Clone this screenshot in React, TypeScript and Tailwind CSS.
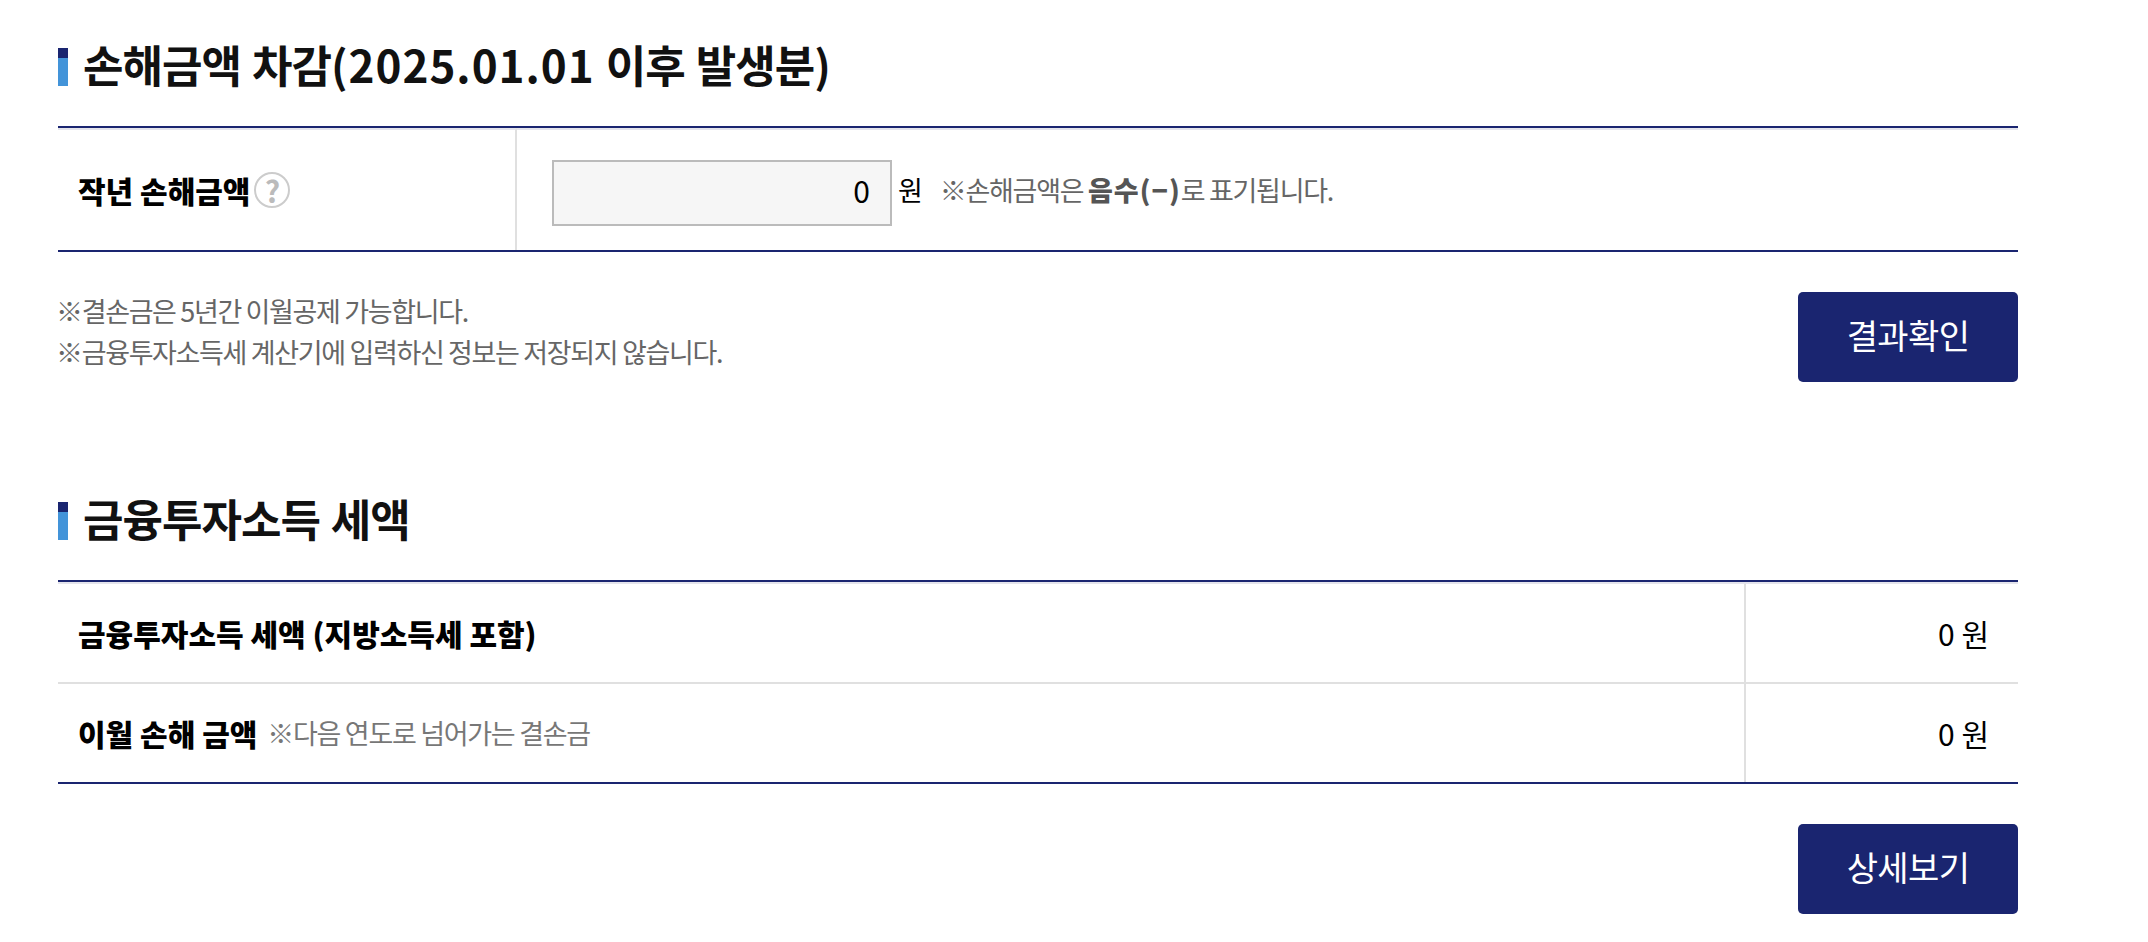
const NAVY = "border-[#1a2570]";

function SectionTitle({ children }: { children: React.ReactNode }) {
  return (
    <div className="flex h-[38px] items-center">
      <span className="flex h-[38px] w-[10px] shrink-0 flex-col">
        <span className="h-[10px] bg-[#1a2570]" />
        <span className="flex-1 bg-[#4394d9]" />
      </span>
      <h2 className="-mt-[7px] ml-[15px] whitespace-nowrap text-[44px] font-bold leading-[38px] tracking-[-1px] text-[#111] [word-spacing:2px]">
        {children}
      </h2>
    </div>
  );
}

function NavyButton({ label }: { label: string }) {
  return (
    <button
      type="button"
      className="flex h-[90px] w-[220px] items-center justify-center rounded-[5px] bg-[#1a2570] pb-[5px] text-[34px] font-normal tracking-[-0.6px] text-white"
    >
      {label}
    </button>
  );
}

function HelpIcon() {
  return (
    <span className="ml-[4px] flex h-[36px] w-[36px] items-center justify-center rounded-full border-2 border-[#ccc] text-[30px] font-bold leading-none text-[#bbb]">
      ?
    </span>
  );
}

export default function App() {
  return (
    <div className="h-[942px] w-[2148px] overflow-hidden bg-white pl-[58px] pt-[48px] font-['Noto_Sans_CJK_KR',sans-serif]">
      <div className="w-[1960px]">
        <SectionTitle>
          손해금액 차감<span className="tracking-[1px]">(2025.01.01</span> 이후 발생분)
        </SectionTitle>

        <div className={`mt-[40px] flex h-[126px] border-y-2 ${NAVY}`}>
          <div className="flex w-[459px] shrink-0 items-center border-r-2 border-t-2 border-r-[#e0e0e0] border-t-[#e4e4ec] pl-[20px]">
            <span className="text-[30px] font-black text-black">작년 손해금액</span>
            <HelpIcon />
          </div>
          <div className="flex flex-1 items-center border-t-2 border-t-[#e4e4ec] pl-[35px]">
            <input
              readOnly
              value="0"
              className="mt-[6px] h-[66px] w-[340px] border-2 border-[#bbb] bg-[#f6f6f6] pb-[6px] pr-[20px] text-right text-[30px] text-black outline-none"
            />
            <span className="ml-[6px] text-[27px] text-black">원</span>
            <span className="ml-[17px] text-[27px] tracking-[-1.3px] text-[#666]">
              ※손해금액은 <b className="font-black tracking-[1px] text-[#555]">음수(−)</b>로 표기됩니다.
            </span>
          </div>
        </div>

        <div className="mt-[40px] flex items-start justify-between">
          <div className="-ml-[2px] -mt-[2px] text-[27px] leading-[41px] tracking-[-1.35px] text-[#666]">
            <p>※결손금은 5년간 이월공제 가능합니다.</p>
            <p>※금융투자소득세 계산기에 입력하신 정보는 저장되지 않습니다.</p>
          </div>
          <NavyButton label="결과확인" />
        </div>

        <div className="mt-[120px]">
          <SectionTitle>금융투자소득 세액</SectionTitle>
        </div>

        <div className={`mt-[40px] border-y-2 ${NAVY}`}>
          <div className="flex h-[102px] border-b-2 border-t-2 border-b-[#e0e0e0] border-t-[#e4e4ec]">
            <div className="flex flex-1 items-center pl-[20px] text-[30px] font-black text-black">
              금융투자소득 세액 (지방소득세 포함)
            </div>
            <div className="flex w-[274px] shrink-0 items-center justify-end border-l-2 border-l-[#e0e0e0] pr-[29px] text-[30px] text-black">
              0 원
            </div>
          </div>
          <div className="flex h-[98px]">
            <div className="flex flex-1 items-center pl-[20px]">
              <span className="text-[30px] font-black text-black">이월 손해 금액</span>
              <span className="ml-[10px] text-[27px] tracking-[-1.3px] text-[#777]">※다음 연도로 넘어가는 결손금</span>
            </div>
            <div className="flex w-[274px] shrink-0 items-center justify-end border-l-2 border-l-[#e0e0e0] pr-[29px] text-[30px] text-black">
              0 원
            </div>
          </div>
        </div>

        <div className="mt-[40px] flex justify-end">
          <NavyButton label="상세보기" />
        </div>
      </div>
    </div>
  );
}
